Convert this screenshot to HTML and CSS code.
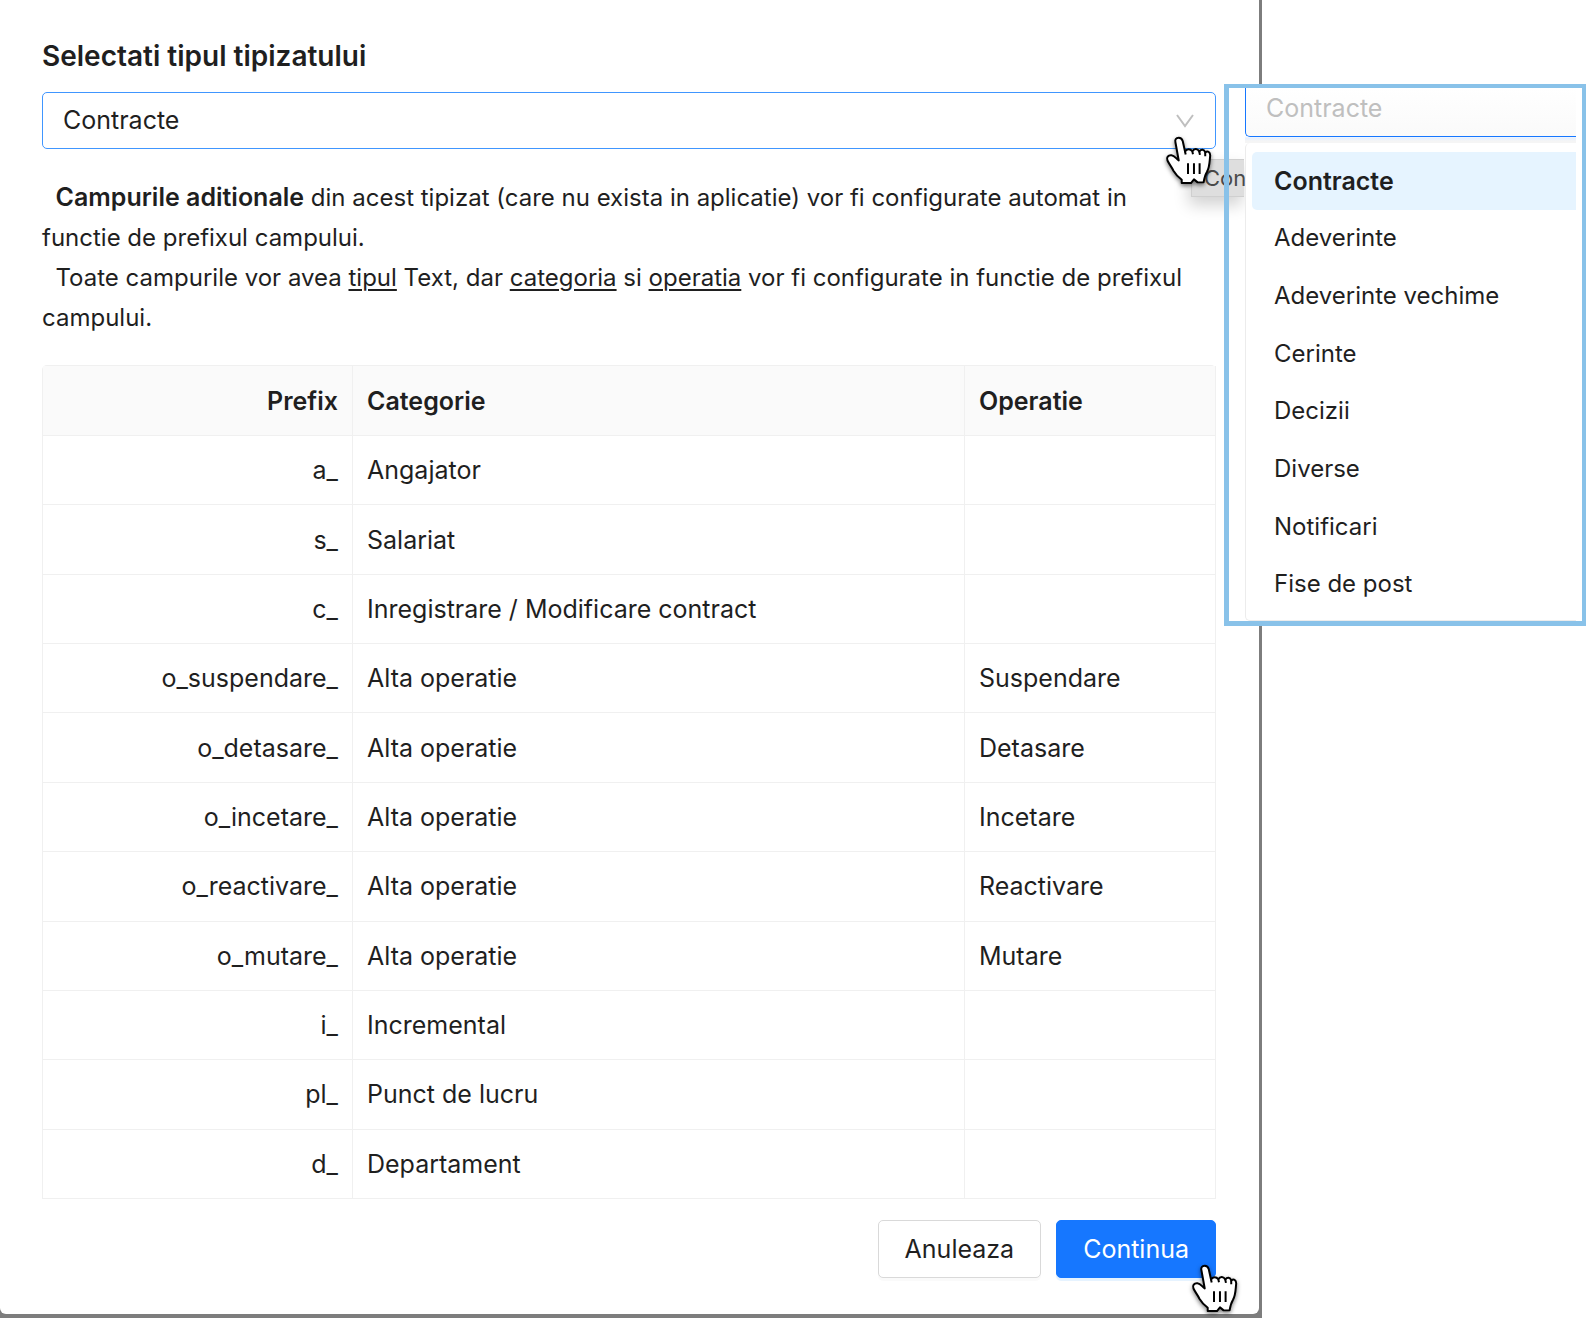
FILE: index.html
```html
<!DOCTYPE html>
<html lang="ro">
<head>
<meta charset="utf-8">
<title>Selectati tipul tipizatului</title>
<link rel="stylesheet" href="styles.css">
</head>
<body>
<svg class="defs" width="0" height="0" aria-hidden="true">
  <symbol id="hand" viewBox="30 190 150 160">
    <path d="M74 198 C66 198 62 204 64 212 L74 267 C66 262 62 252 52 251 C42 250 36 258 40 267 C46 280 52 285 58 298 C66 312 74 318 83 325 L83 335 L111 335 L120 324 L131 333 L149 333 C151 322 153 312 159 302 C168 286 167 268 169 252 C169 240 161 237 154 243 C151 233 142 232 136 240 C131 230 121 229 115 239 C109 231 99 230 93 240 L86 208 C84 201 80 198 74 198 Z" fill="#fff" stroke="#000" stroke-width="6" stroke-linejoin="round"/>
    <path d="M102 275V308M120 275V308M137 275V308M93 240L95 249M115 239L117 248M136 240L138 250M154 243L154 254" fill="none" stroke="#000" stroke-width="6"/>
  </symbol>
</svg>
<main class="page">
  <div class="backdrop">
    <section class="dialog">
      <label class="title" for="tip">Selectati tipul tipizatului</label>
      <div class="field">
        <select id="tip" class="select">
          <option>Contracte</option>
          <option>Adeverinte</option>
          <option>Adeverinte vechime</option>
          <option>Cerinte</option>
          <option>Decizii</option>
          <option>Diverse</option>
          <option>Notificari</option>
          <option>Fise de post</option>
        </select>
        <svg class="chevron" viewBox="0 0 18 14" aria-hidden="true"><path d="M1 1L9 12L17 1" fill="none" stroke="#bfbfbf" stroke-width="2"/></svg>
        <span class="tooltip">Con</span>
        <svg class="cursor cursor-field" aria-hidden="true"><use href="#hand"/></svg>
      </div>
      <div class="info">
        <p>&nbsp; <strong>Campurile aditionale</strong> din acest tipizat (care nu exista in aplicatie) vor fi configurate automat in functie de prefixul campului.</p>
        <p>&nbsp; Toate campurile vor avea <u>tipul</u> Text, dar <u>categoria</u> si <u>operatia</u> vor fi configurate in functie de prefixul campului.</p>
      </div>
      <table class="table">
        <thead><tr><th class="prefix">Prefix</th><th class="category">Categorie</th><th>Operatie</th></tr></thead>
        <tbody>
          <tr><td class="prefix">a_</td><td>Angajator</td><td></td></tr>
          <tr><td class="prefix">s_</td><td>Salariat</td><td></td></tr>
          <tr><td class="prefix">c_</td><td>Inregistrare / Modificare contract</td><td></td></tr>
          <tr><td class="prefix">o_suspendare_</td><td>Alta operatie</td><td>Suspendare</td></tr>
          <tr><td class="prefix">o_detasare_</td><td>Alta operatie</td><td>Detasare</td></tr>
          <tr><td class="prefix">o_incetare_</td><td>Alta operatie</td><td>Incetare</td></tr>
          <tr><td class="prefix">o_reactivare_</td><td>Alta operatie</td><td>Reactivare</td></tr>
          <tr><td class="prefix">o_mutare_</td><td>Alta operatie</td><td>Mutare</td></tr>
          <tr><td class="prefix">i_</td><td>Incremental</td><td></td></tr>
          <tr><td class="prefix">pl_</td><td>Punct de lucru</td><td></td></tr>
          <tr><td class="prefix">d_</td><td>Departament</td><td></td></tr>
        </tbody>
      </table>
      <footer class="actions">
        <button type="button" class="button">Anuleaza</button>
        <button type="button" class="button primary">Continua</button>
        <svg class="cursor cursor-submit" aria-hidden="true"><use href="#hand"/></svg>
      </footer>
    </section>
  </div>
  <aside class="callout">
    <div class="search"><input type="text" class="search-input" placeholder="Contracte" aria-label="Contracte"></div>
    <ul class="menu">
      <li class="selected">Contracte</li>
      <li>Adeverinte</li>
      <li>Adeverinte vechime</li>
      <li>Cerinte</li>
      <li>Decizii</li>
      <li>Diverse</li>
      <li>Notificari</li>
      <li>Fise de post</li>
    </ul>
  </aside>
</main>
</body>
</html>
```
FILE: styles.css
```css
* { box-sizing: border-box; }

body {
  margin: 0;
  background: #fff;
  color: #1f1f1f;
  font: 24px/40px Inter, "Liberation Sans", sans-serif;
}

.defs { position: absolute; }

.page {
  position: relative;
  padding-right: 332px;
}

.backdrop {
  background: #7d7d7d;
  padding: 0 3px 4px 0;
}

.dialog {
  background: #fff;
  border-radius: 0 0 6px 6px;
  padding: 36px 43px 36px 42px;
}

.title {
  display: block;
  font-size: 28px;
  font-weight: 600;
}

.field {
  position: relative;
  margin: 16px 0 29px;
}

.select {
  display: block;
  width: 100%;
  height: 57px;
  padding: 0 20px 1px;
  border: 1px solid #4096ff;
  border-radius: 5px;
  background: #fff;
  color: inherit;
  font: inherit;
  font-size: 25px;
  appearance: none;
}

.chevron {
  position: absolute;
  top: 22px;
  right: 22px;
  width: 18px;
  height: 14px;
}

.tooltip {
  position: absolute;
  top: 67px;
  right: -28px;
  width: 53px;
  height: 38px;
  padding-left: 12px;
  background: #dedede;
  border: 1px solid #cfcfcf;
  border-right: 0;
  box-shadow: -2px 8px 16px rgba(0, 0, 0, .18);
  color: #4a4a4a;
  font-size: 22px;
  line-height: 36px;
}

.cursor {
  position: absolute;
  width: 50px;
  height: 53px;
  filter: drop-shadow(0 2px 2px rgba(0, 0, 0, .5));
}

.cursor-field { top: 43px; right: 2px; }
.cursor-submit { top: 43px; right: -24px; }

.info { padding-right: 20px; }

.info p { margin: 0; }

.info strong {
  font-size: 25px;
  font-weight: 600;
  line-height: 30px;
}

.info u {
  text-decoration-thickness: 2px;
  text-underline-offset: 3px;
}

.table {
  width: 100%;
  height: 834px;
  margin-top: 27px;
  border: 1px solid #f0f0f0;
  border-width: 1px 0 0 1px;
  border-radius: 5px 5px 0 0;
  border-spacing: 0;
  table-layout: fixed;
  font-size: 25px;
}

.table th,
.table td {
  padding: 14px;
  border: 1px solid #f0f0f0;
  border-width: 0 1px 1px 0;
  text-align: left;
}

.table th {
  padding-top: 15px;
  background: #fafafa;
  font-weight: 600;
}

.table th.prefix { width: 310px; }
.table th.category { width: 612px; }
.table .prefix { text-align: right; }

.actions {
  position: relative;
  display: flex;
  justify-content: flex-end;
  gap: 15px;
  margin-top: 21px;
}

.button {
  height: 58px;
  padding: 0 26px;
  border: 1px solid #d9d9d9;
  border-radius: 5px;
  background: #fff;
  box-shadow: 0 3px 0 rgba(0, 0, 0, .02);
  color: inherit;
  font: inherit;
  font-size: 25px;
}

.primary {
  border-color: #1677ff;
  background: #1677ff;
  box-shadow: 0 3px 0 #e6f3ff;
  color: #fff;
}

/* The left padding stays see-through so that the tooltip shows behind it. */
.callout {
  position: absolute;
  top: 84px;
  right: 8px;
  width: 362px;
  padding: 0 6px 0 16px;
  border: 5px solid #89c2e9;
  border-width: 4px 4px 5px 5px;
}

.search {
  padding-bottom: 6px;
  background: linear-gradient(#fff 48px, #e6f0ff 50px, #f5f5f5 53px);
}

.search-input {
  display: block;
  width: 100%;
  height: 49px;
  padding: 0 20px 8px;
  border: 1px solid #1677ff;
  border-top: 0;
  border-right: 0;
  border-radius: 0 0 0 5px;
  background: linear-gradient(#fff, #fafafa);
  font: inherit;
  font-size: 25px;
}

.search-input::placeholder {
  color: #bfbfbf;
  opacity: 1;
}

.menu {
  display: grid;
  grid-auto-rows: 1fr;
  height: 478px;
  margin: 0;
  padding: 9px 0 7px 6px;
  border: solid #ececec;
  border-width: 0 0 1px 1px;
  border-radius: 5px 0 0 5px;
  background: #fff;
  list-style: none;
}

.menu li {
  display: flex;
  align-items: center;
  padding-left: 22px;
}

.menu .selected {
  border-radius: 5px 0 0 5px;
  background: #e6f4ff;
  font-size: 25px;
  font-weight: 600;
}
```
